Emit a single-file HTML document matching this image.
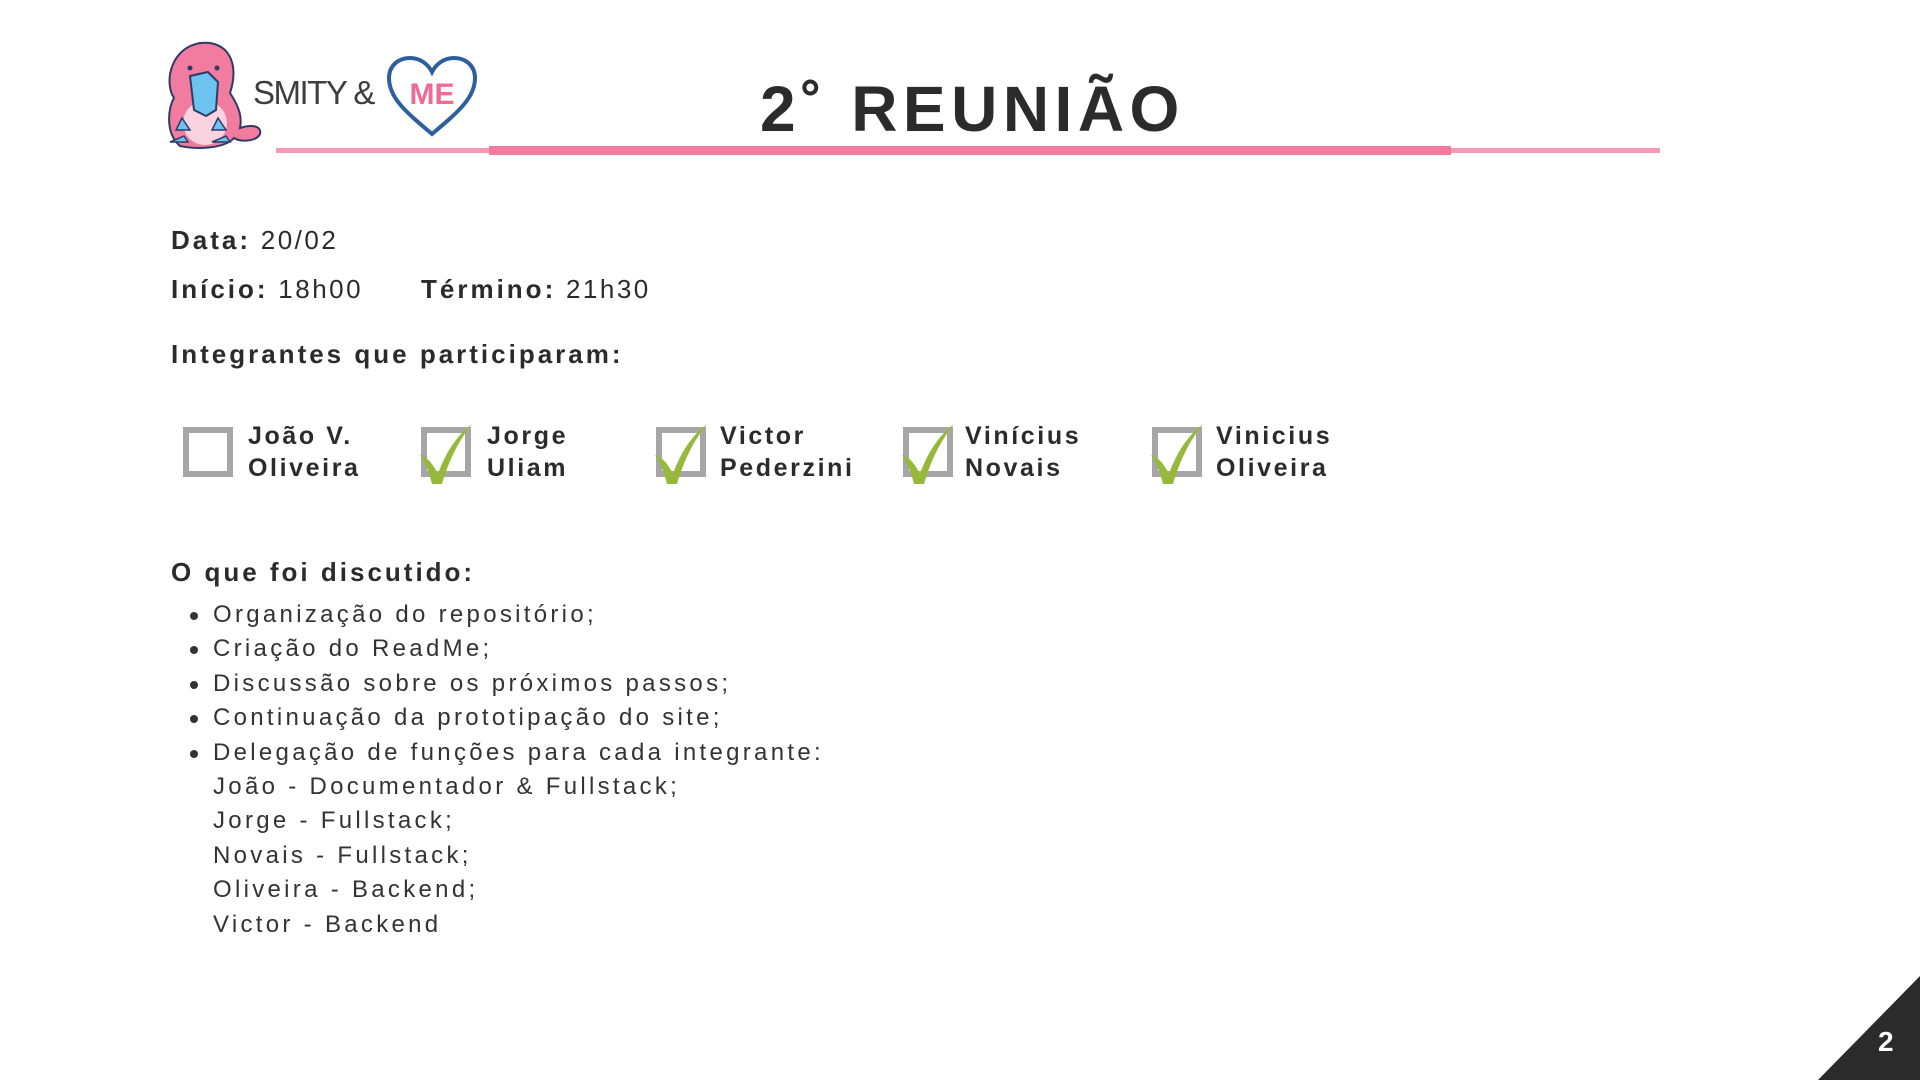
<!DOCTYPE html>
<html><head><meta charset="utf-8"><style>
body{margin:0;width:1920px;height:1080px;background:#fff;position:relative;overflow:hidden;font-family:"Liberation Sans",sans-serif;color:#2b2b2b}
.a{position:absolute;white-space:nowrap}
.b{font-weight:bold;letter-spacing:3px;font-size:26px}
.r{font-weight:normal;letter-spacing:2.5px;font-size:26px}
.box{position:absolute;width:38px;height:38px;border:6px solid #a6a6a6;top:427px}
.nm{position:absolute;top:420px;font-weight:bold;font-size:25px;letter-spacing:2.6px;line-height:32px;color:#2b2b2b}
.li{position:absolute;left:213px;font-size:24px;letter-spacing:3.3px;color:#333;line-height:34.4px}
</style></head><body>
<svg class="a" style="left:160px;top:38px" width="105" height="114" viewBox="0 0 105 114">
<path d="M20 108 C5 95 8 70 14 60 C4 45 10 10 40 5 C68 2 80 25 70 55 C80 70 82 80 80 90 C92 86 102 88 100 96 C96 104 80 104 74 100 C65 110 40 112 20 108Z" fill="#f27ba0" stroke="#2f3a66" stroke-width="2"/>
<ellipse cx="45" cy="85" rx="22" ry="22" fill="#fbd3e0"/>
<path d="M30 38 L48 34 L58 44 L56 72 L46 78 L34 72 Z" fill="#6cc3f0" stroke="#2f3a66" stroke-width="2"/>
<circle cx="30" cy="30" r="2.5" fill="#2f3a66"/><circle cx="57" cy="30" r="2.5" fill="#2f3a66"/>
<path d="M22 80 l-6 12 h14z M58 80 l-6 12 h14z M10 104 h18 l-4-6z M52 104 h18 l-4-6z" fill="#6cc3f0" stroke="#2f3a66" stroke-width="1.5"/>
</svg>
<div class="a" style="left:253px;top:74px;font-size:33px;color:#3d3d3d;letter-spacing:-1.5px">SMITY &amp;</div>
<svg class="a" style="left:386px;top:56px" width="92" height="82" viewBox="0 0 92 82">
<path d="M46 78 C20 56 3 42 3 22 C3 10 12 2 24 2 C34 2 42 8 46 16 C50 8 58 2 68 2 C80 2 89 10 89 22 C89 42 72 56 46 78Z" fill="#fff" stroke="#2c5f9e" stroke-width="4"/>
<text x="46" y="48" text-anchor="middle" font-family="Liberation Sans" font-size="30" font-weight="bold" fill="#f06a98">ME</text>
</svg>
<div class="a" style="left:760px;top:72px;font-size:64px;font-weight:bold;letter-spacing:5.5px;color:#2b2b2b">2˚ REUNIÃO</div>
<div class="a" style="left:276px;top:148px;width:1384px;height:5px;background:#f49ab6"></div>
<div class="a" style="left:489px;top:146px;width:962px;height:9px;background:#f27ba0"></div>
<div class="a" style="left:171px;top:225px"><span class="b">Data:</span><span class="r"> 20/02</span></div>
<div class="a" style="left:171px;top:274px"><span class="b">Início:</span><span class="r"> 18h00</span></div>
<div class="a" style="left:421px;top:274px"><span class="b">Término:</span><span class="r"> 21h30</span></div>
<div class="a b" style="left:171px;top:339px">Integrantes que participaram:</div>
<div class="box" style="left:183px"></div>
<div class="box" style="left:421px"></div>
<div class="box" style="left:656px"></div>
<div class="box" style="left:903px"></div>
<div class="box" style="left:1152px"></div>
<svg class="a" style="left:0;top:0" width="1920" height="1080">
<g fill="#96b93a">
<path d="M420 455 C428 457 434 466 438 474 C445 454 456 436 472 424 C458 442 449 460 442 484 L432 484 C429 472 425 462 420 455Z"/>
<path d="M655 455 C663 457 669 466 673 474 C680 454 691 436 707 424 C693 442 684 460 677 484 L667 484 C664 472 660 462 655 455Z"/>
<path d="M902 455 C910 457 916 466 920 474 C927 454 938 436 954 424 C940 442 931 460 924 484 L914 484 C911 472 907 462 902 455Z"/>
<path d="M1151 455 C1159 457 1165 466 1169 474 C1176 454 1187 436 1203 424 C1189 442 1180 460 1173 484 L1163 484 C1160 472 1156 462 1151 455Z"/>
</g></svg>
<div class="nm" style="left:248px">João V.<br>Oliveira</div>
<div class="nm" style="left:487px">Jorge<br>Uliam</div>
<div class="nm" style="left:720px">Victor<br>Pederzini</div>
<div class="nm" style="left:965px">Vinícius<br>Novais</div>
<div class="nm" style="left:1216px">Vinicius<br>Oliveira</div>
<div class="a b" style="left:171px;top:557px">O que foi discutido:</div>
<div class="li" style="top:598px">Organização do repositório;<br>Criação do ReadMe;<br>Discussão sobre os próximos passos;<br>Continuação da prototipação do site;<br>Delegação de funções para cada integrante:<br>João - Documentador &amp; Fullstack;<br>Jorge - Fullstack;<br>Novais - Fullstack;<br>Oliveira - Backend;<br>Victor - Backend</div>
<div class="a" style="left:190px;top:612px;width:8px;height:8px;border-radius:50%;background:#333"></div>
<div class="a" style="left:190px;top:646px;width:8px;height:8px;border-radius:50%;background:#333"></div>
<div class="a" style="left:190px;top:681px;width:8px;height:8px;border-radius:50%;background:#333"></div>
<div class="a" style="left:190px;top:715px;width:8px;height:8px;border-radius:50%;background:#333"></div>
<div class="a" style="left:190px;top:750px;width:8px;height:8px;border-radius:50%;background:#333"></div>
<svg class="a" style="left:1818px;top:976px" width="102" height="104"><path d="M102 0 V104 H0Z" fill="#2b2b2b"/></svg>
<div class="a" style="left:1878px;top:1026px;color:#fff;font-weight:bold;font-size:28px">2</div>
</body></html>
